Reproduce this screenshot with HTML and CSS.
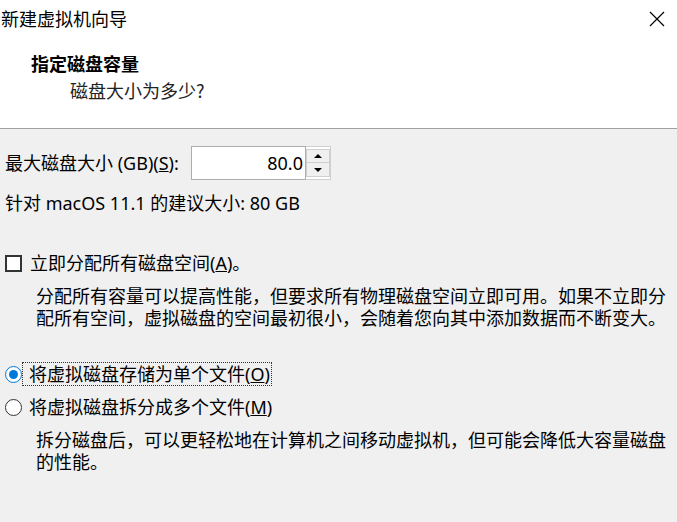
FILE: index.html
```html
<!DOCTYPE html>
<html lang="zh-CN">
<head>
  <meta charset="UTF-8">
  <title>新建虚拟机向导</title>
  <link rel="stylesheet" href="styles.css">
</head>
<body>
  <div class="dialog">
    <div class="top">
      <div class="titlebar">
        <span class="title">新建虚拟机向导</span>
        <svg class="close" width="16" height="16" viewBox="0 0 16 16">
          <path d="M1 1 L15 15 M15 1 L1 15" stroke="#000" stroke-width="1.2" fill="none"/>
        </svg>
      </div>
      <div class="header">
        <div class="heading">指定磁盘容量</div>
        <div class="subheading">磁盘大小为多少?</div>
      </div>
    </div>

    <div class="content">
      <div class="size-row">
        <span class="label">最大磁盘大小 (GB)(<u>S</u>):</span>
        <div class="spinbox">
          <div class="spin-value">80.0</div>
          <div class="spin-buttons">
            <div class="spin-btn"><span class="arrow up"></span></div>
            <div class="spin-btn"><span class="arrow down"></span></div>
          </div>
        </div>
      </div>
      <div class="hint">针对 macOS 11.1 的建议大小: 80 GB</div>

      <div class="option check-row">
        <span class="checkbox"></span>
        <span class="opt-label">立即分配所有磁盘空间(<u>A</u>)。</span>
      </div>
      <p class="desc">分配所有容量可以提高性能，但要求所有物理磁盘空间立即可用。如果不立即分<br>配所有空间，虚拟磁盘的空间最初很小，会随着您向其中添加数据而不断变大。</p>

      <div class="option radio-row first">
        <span class="radio checked"></span>
        <span class="opt-label focused">将虚拟磁盘存储为单个文件(<u>O</u>)</span>
      </div>
      <div class="option radio-row">
        <span class="radio"></span>
        <span class="opt-label">将虚拟磁盘拆分成多个文件(<u>M</u>)</span>
      </div>
      <p class="desc">拆分磁盘后，可以更轻松地在计算机之间移动虚拟机，但可能会降低大容量磁盘<br>的性能。</p>
    </div>
  </div>
</body>
</html>
```

FILE: styles.css
```css
body {
  margin: 0;
  padding: 0;
  background-color: #f0f0f0;
  font-family: "Noto Sans", "Noto Sans CJK SC", sans-serif;
  font-size: 18px;
  color: #000;
}
.dialog {
  width: 677px;
  height: 522px;
  overflow: hidden;
}
.top {
  background-color: #fff;
  border-bottom: 1px solid #a0a0a0;
  height: 128px;
}
.titlebar {
  height: 38px;
  display: flex;
  align-items: center;
  justify-content: space-between;
  padding-right: 12px;
}
.title {
  line-height: 24px;
  padding-left: 1px;
}
.close {
  display: block;
}
.header {
  padding-top: 13px;
}
.heading {
  font-family: "Noto Sans CJK SC", sans-serif;
  font-weight: bold;
  line-height: 24px;
  padding-left: 31px;
}
.subheading {
  font-family: "Noto Sans CJK SC", sans-serif;
  line-height: 24px;
  margin-top: 3px;
  padding-left: 70px;
  color: #222;
}
.content {
  padding: 17px 0 0 5px;
}
.size-row {
  display: flex;
  align-items: center;
  height: 34px;
}
.label {
  line-height: 24px;
  width: 186px;
}
.spinbox {
  display: flex;
  height: 34px;
}
.spin-value {
  width: 111px;
  height: 32px;
  background-color: #fff;
  border: 1px solid #adadad;
  text-align: right;
  line-height: 32px;
  padding-right: 2px;
}
.spin-buttons {
  display: flex;
  flex-direction: column;
  padding: 2px 0;
  border: 1px solid #d0d0d0;
  border-left: none;
  background-color: #fff;
}
.spin-btn {
  width: 24px;
  height: 15px;
  background-color: #f0f0f0;
  border: 1px solid #cfcfcf;
  box-sizing: border-box;
  display: flex;
  align-items: center;
  justify-content: center;
}
.spin-btn + .spin-btn {
  border-top: none;
}
.arrow {
  width: 0;
  height: 0;
  border-left: 4px solid transparent;
  border-right: 4px solid transparent;
}
.arrow.up {
  border-bottom: 4px solid #000;
}
.arrow.down {
  border-top: 4px solid #000;
}
.hint {
  line-height: 24px;
  margin-top: 11px;
}
.option {
  display: flex;
  align-items: center;
  height: 24px;
}
.check-row {
  margin-top: 36px;
}
.checkbox {
  width: 13px;
  height: 13px;
  border: 2px solid #333;
  background-color: #fff;
  margin-right: 8px;
}
.desc {
  margin: 10px 0 0 31px;
  line-height: 22px;
  white-space: nowrap;
}
.radio-row.first {
  margin-top: 33px;
}
.radio-row + .radio-row {
  margin-top: 9px;
}
.radio {
  width: 15px;
  height: 15px;
  border: 1.5px solid #333;
  border-radius: 50%;
  background-color: #fff;
  margin-right: 0;
  position: relative;
}
.radio.checked {
  border-color: #0078d7;
}
.radio.checked::after {
  content: "";
  position: absolute;
  left: 3px;
  top: 3px;
  width: 9px;
  height: 9px;
  border-radius: 50%;
  background-color: #0078d7;
}
.opt-label {
  line-height: 22px;
  padding: 0 1px 0 6px;
  border: 1px dotted transparent;
}
.opt-label.focused {
  border-color: #333;
}
.check-row .opt-label {
  padding-left: 0;
  border: none;
}
```
